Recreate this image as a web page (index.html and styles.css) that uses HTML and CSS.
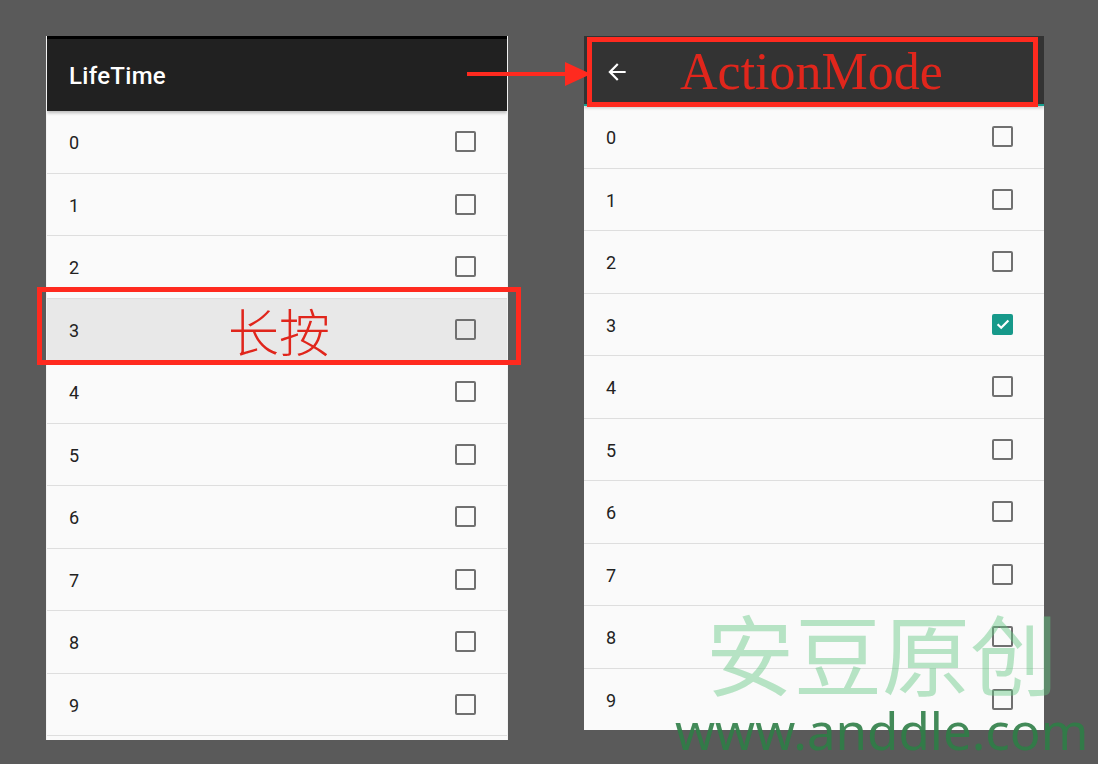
FILE: index.html
```html
<!DOCTYPE html>
<html lang="zh">
<head>
<meta charset="utf-8">
<title>LifeTime ActionMode</title>
<link rel="stylesheet" href="styles.css">
</head>
<body>
<div class="stage">
  <section class="phone phone-left">
    <header class="bar bar-left"><span class="bar-title">LifeTime</span></header>
    <ul class="list">
      <li class="row"><span class="num">0</span><span class="cb"></span></li>
      <li class="row"><span class="num">1</span><span class="cb"></span></li>
      <li class="row"><span class="num">2</span><span class="cb"></span></li>
      <li class="row row-pressed"><span class="num">3</span><span class="press-note">长按</span><span class="cb"></span></li>
      <li class="row"><span class="num">4</span><span class="cb"></span></li>
      <li class="row"><span class="num">5</span><span class="cb"></span></li>
      <li class="row"><span class="num">6</span><span class="cb"></span></li>
      <li class="row"><span class="num">7</span><span class="cb"></span></li>
      <li class="row"><span class="num">8</span><span class="cb"></span></li>
      <li class="row"><span class="num">9</span><span class="cb"></span></li>
    </ul>
  </section>

  <section class="phone phone-right">
    <header class="bar bar-right">
      <svg class="back" viewBox="0 0 24 24" width="26" height="26"><path d="M20 11H7.83l5.59-5.59L12 4l-8 8 8 8 1.41-1.41L7.83 13H20v-2z" fill="#ffffff"/></svg>
      <span class="am-title">ActionMode</span>
    </header>
    <ul class="list">
      <li class="row"><span class="num">0</span><span class="cb"></span></li>
      <li class="row"><span class="num">1</span><span class="cb"></span></li>
      <li class="row"><span class="num">2</span><span class="cb"></span></li>
      <li class="row"><span class="num">3</span><span class="cb cb-on"><svg viewBox="0 0 20 20" width="20" height="20"><path d="M4.6 10.2l3.6 3.5 7.2-7.2" fill="none" stroke="#fff" stroke-width="2.2"/></svg></span></li>
      <li class="row"><span class="num">4</span><span class="cb"></span></li>
      <li class="row"><span class="num">5</span><span class="cb"></span></li>
      <li class="row"><span class="num">6</span><span class="cb"></span></li>
      <li class="row"><span class="num">7</span><span class="cb"></span></li>
      <li class="row"><span class="num">8</span><span class="cb"></span></li>
      <li class="row row-last"><span class="num">9</span><span class="cb"></span></li>
    </ul>
  </section>

  <div class="mark mark-press"></div>
  <div class="mark mark-header"></div>
  <svg class="arrow" viewBox="0 0 124 28" width="124" height="28"><rect x="0" y="12" width="104" height="4" fill="#ff2a1f"/><polygon points="98,2 124,14 98,26" fill="#ff2a1f"/></svg>

  <div class="wm wm-cn">安豆原创</div>
  <div class="wm wm-url">www.anddle.com</div>
</div>
</body>
</html>
```

FILE: styles.css
```css
* { box-sizing: border-box; }
html, body { margin: 0; padding: 0; }
body {
  background: #5a5a5a;
  width: 1098px;
  height: 764px;
  overflow: hidden;
  font-family: Roboto, "Noto Sans", "Noto Sans CJK SC", sans-serif;
}
.stage {
  position: relative;
  width: 1098px;
  height: 764px;
  display: flex;
  align-items: flex-start;
  gap: 76px;
  padding: 36px 0 0 46px;
}
.phone {
  background: #fafafa;
  display: flex;
  flex-direction: column;
  overflow: hidden;
}
.phone-left {
  width: 462px;
  height: 704px;
  border-left: 1px solid #f2f2f2;
  border-right: 1px solid #f2f2f2;
}
.phone-right {
  width: 460px;
  height: 694px;
}
.bar {
  display: flex;
  align-items: center;
  flex: none;
  position: relative;
  z-index: 1;
}
.bar-left {
  height: 75px;
  background: #212121;
  border-top: 3px solid #000;
  padding-left: 22px;
  box-shadow: 0 2px 3px rgba(0,0,0,0.25);
}
.bar-title {
  color: #fff;
  font-size: 24px;
  font-weight: 500;
  letter-spacing: 0.3px;
  margin-top: 2px;
}
.bar-right {
  height: 70px;
  background: #333333;
  border-bottom: 2px solid #16a08f;
  padding-left: 20px;
  box-shadow: 0 2px 3px rgba(0,0,0,0.2);
}
.back { display: block; margin-top: 4px; }
.am-title {
  font-family: "Liberation Serif", "Times New Roman", serif;
  color: #e0261c;
  font-size: 52px;
  margin-left: 50px;
  margin-top: 4px;
  line-height: 1;
}
.list {
  list-style: none;
  margin: 0;
  padding: 0;
}
.row {
  height: 62.5px;
  border-bottom: 1px solid #dedede;
  display: flex;
  align-items: center;
  padding: 0 31px 0 22px;
  position: relative;
}
.row-last { border-bottom: none; }
.row-pressed { background: #e8e8e8; }
.num {
  font-size: 18px;
  color: #222;
  flex: 1;
  margin-top: 2px;
}
.press-note {
  position: absolute;
  left: 181px;
  top: 4px;
  font-family: "Noto Sans CJK SC", sans-serif;
  font-weight: 300;
  font-size: 51px;
  line-height: 54px;
  color: #e0261c;
}
.cb {
  width: 21px;
  height: 21px;
  border: 2px solid #707070;
  border-radius: 2px;
  display: flex;
  align-items: center;
  justify-content: center;
}
.cb-on {
  background: #16998a;
  border-color: #16998a;
}
.cb-on svg { flex: none; }
.mark {
  position: absolute;
  z-index: 5;
  border: 5px solid #ff2a1f;
}
.mark-press {
  left: 37px;
  top: 287px;
  width: 484px;
  height: 78px;
}
.mark-header {
  left: 587px;
  top: 37px;
  width: 451px;
  height: 70px;
}
.arrow {
  position: absolute;
  z-index: 5;
  left: 467px;
  top: 60px;
}
.wm {
  position: absolute;
  z-index: 6;
  white-space: nowrap;
  pointer-events: none;
}
.wm-cn {
  left: 706px;
  top: 596px;
  font-family: "Noto Sans CJK SC", sans-serif;
  font-weight: 400;
  font-size: 88px;
  line-height: 110px;
  color: rgba(100, 200, 130, 0.45);
}
.wm-url {
  left: 675px;
  top: 699px;
  font-family: "Noto Sans", sans-serif;
  font-weight: 400;
  font-size: 51px;
  line-height: 62px;
  letter-spacing: 0;
  color: rgba(45, 125, 70, 0.9);
}
```
